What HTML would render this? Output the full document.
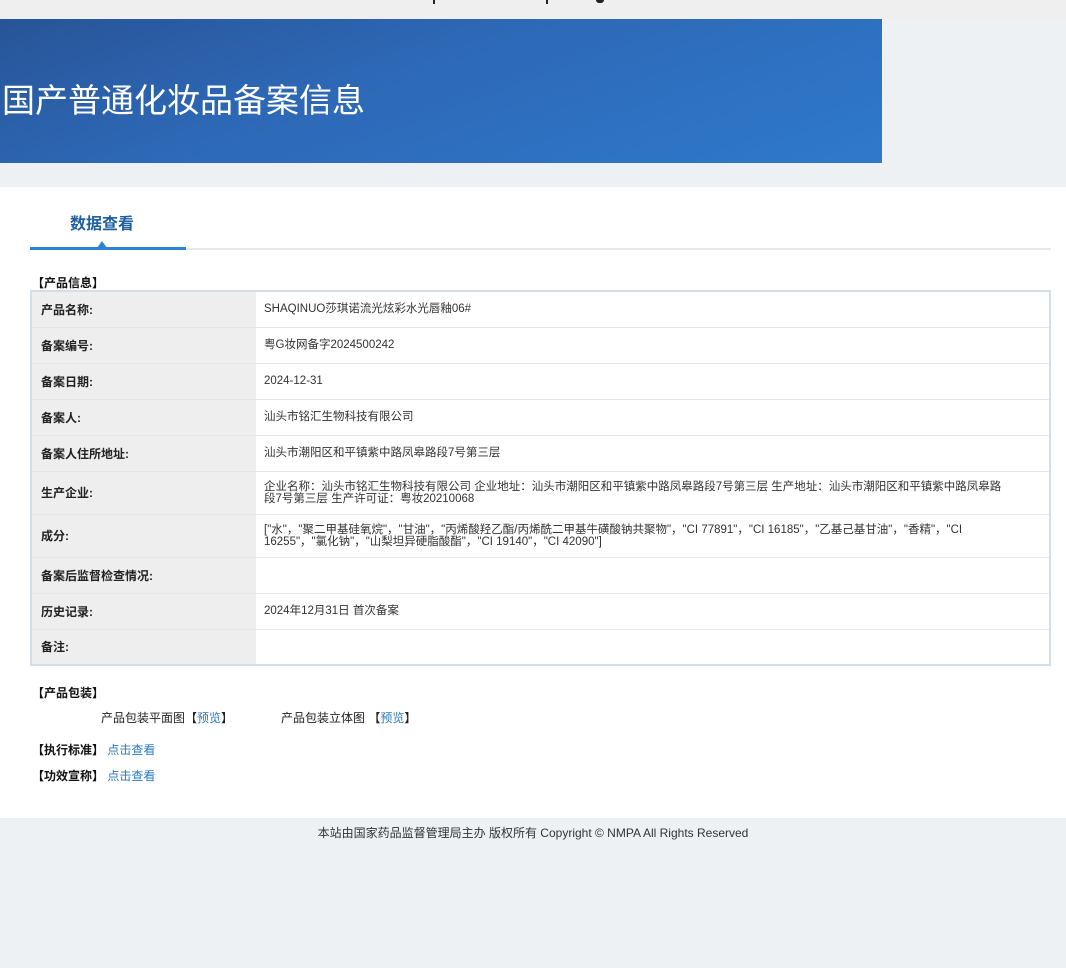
<!DOCTYPE html>
<html><head><meta charset="utf-8"><style>
*{margin:0;padding:0;box-sizing:border-box}
body{width:1066px;height:968px;background:#eef1f4;font-family:"Liberation Sans","Noto Sans CJK SC",sans-serif;position:relative;overflow:hidden;color:#333}
.top{position:absolute;left:0;top:0;width:1066px;height:19px;background:#efefef}
.d{position:absolute;background:#222}
.banner{position:absolute;left:0;top:19px;width:882px;height:144px;background:linear-gradient(160deg,#285497 0%,#2d68b6 40%,#2f79cc 100%)}
.banner h1{position:absolute;left:2px;top:55px;font-size:33px;font-weight:normal;color:#fff;letter-spacing:0px;font-family:"Noto Sans CJK SC",sans-serif}
.main{position:absolute;left:0;top:187px;width:1066px;height:631px;background:#fff}
.tab{position:absolute;left:70px;top:23px;font-size:16px;font-weight:bold;color:#1f5f9e}
.line{position:absolute;left:30px;top:61px;width:1021px;height:2px;background:#e6e8ea}
.line2{position:absolute;left:30px;top:60px;width:156px;height:3px;background:#2d82d2}
.tri{position:absolute;left:97px;top:54px;border-left:5px solid transparent;border-right:5px solid transparent;border-bottom:7px solid #2d82d2}
.sec{position:absolute;font-size:12px;font-weight:bold;color:#111}
table{position:absolute;left:30px;top:103px;width:1021px;border-collapse:collapse;border:2px solid #d3dfe8;font-size:11.5px}
td{border-bottom:1px solid #e6e6e6;vertical-align:middle}
td.l{width:225px;background:#eeeeee;font-weight:bold;font-size:12px;color:#222;padding-left:9px}
td.v{padding-left:8px;color:#333;line-height:12px}
td.v div{width:740px}
a{color:#2a7ac0;text-decoration:none}
.t{position:absolute;font-size:12px;color:#222}
.foot{position:absolute;left:0;top:824px;width:1066px;text-align:center;font-size:12px;color:#333}
</style></head><body>
<div class="top"></div>
<div class="d" style="left:433px;top:0;width:2px;height:4px"></div>
<div class="d" style="left:546px;top:0;width:2px;height:4px"></div>
<div class="d" style="left:596px;top:0;width:8px;height:3px;border-radius:0 0 4px 4px"></div>
<div class="banner"><h1>国产普通化妆品备案信息</h1></div>
<div class="main">
<div class="tab">数据查看</div>
<div class="line"></div><div class="line2"></div><div class="tri"></div>
<div class="sec" style="left:32px;top:87px">【产品信息】</div>
<table>
<tr style="height:36px"><td class="l">产品名称:</td><td class="v"><div>SHAQINUO莎琪诺流光炫彩水光唇釉06#</div></td></tr>
<tr style="height:36px"><td class="l">备案编号:</td><td class="v"><div>粤G妆网备字2024500242</div></td></tr>
<tr style="height:36px"><td class="l">备案日期:</td><td class="v"><div>2024-12-31</div></td></tr>
<tr style="height:36px"><td class="l">备案人:</td><td class="v"><div>汕头市铭汇生物科技有限公司</div></td></tr>
<tr style="height:36px"><td class="l">备案人住所地址:</td><td class="v"><div>汕头市潮阳区和平镇紫中路凤皋路段7号第三层</div></td></tr>
<tr style="height:43px"><td class="l">生产企业:</td><td class="v"><div>企业名称：汕头市铭汇生物科技有限公司 企业地址：汕头市潮阳区和平镇紫中路凤皋路段7号第三层 生产地址：汕头市潮阳区和平镇紫中路凤皋路段7号第三层 生产许可证：粤妆20210068</div></td></tr>
<tr style="height:43px"><td class="l">成分:</td><td class="v"><div>["水"，"聚二甲基硅氧烷"，"甘油"，"丙烯酸羟乙酯/丙烯酰二甲基牛磺酸钠共聚物"，"CI 77891"，"CI 16185"，"乙基己基甘油"，"香精"，"CI 16255"，"氯化钠"，"山梨坦异硬脂酸酯"，"CI 19140"，"CI 42090"]</div></td></tr>
<tr style="height:36px"><td class="l">备案后监督检查情况:</td><td class="v"></td></tr>
<tr style="height:36px"><td class="l">历史记录:</td><td class="v"><div>2024年12月31日 首次备案</div></td></tr>
<tr style="height:36px"><td class="l">备注:</td><td class="v"></td></tr>
</table>
<div class="sec" style="left:32px;top:497px">【产品包装】</div>
<div class="t" style="left:101px;top:522px">产品包装平面图【<a>预览</a>】</div>
<div class="t" style="left:281px;top:522px">产品包装立体图 【<a>预览</a>】</div>
<div class="sec" style="left:32px;top:554px">【执行标准】 <a style="font-weight:normal">点击查看</a></div>
<div class="sec" style="left:32px;top:580px">【功效宣称】 <a style="font-weight:normal">点击查看</a></div>
</div>
<div class="foot">本站由国家药品监督管理局主办 版权所有 Copyright © NMPA All Rights Reserved</div>
</body></html>
